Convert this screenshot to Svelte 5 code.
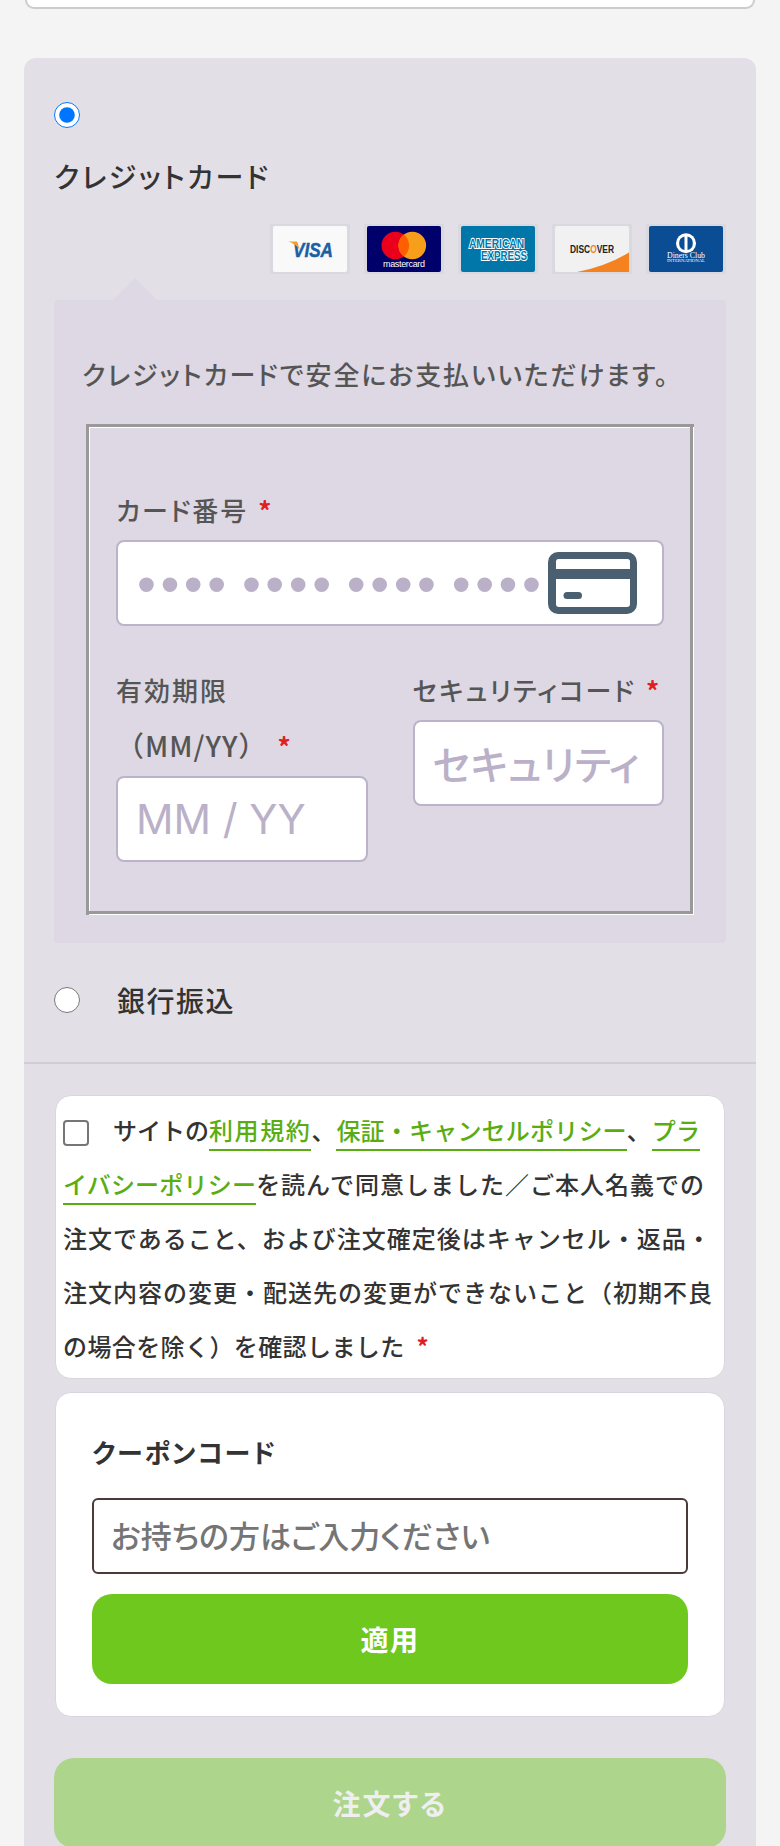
<script>
	let agreed = $state(false);
	let method = $state('card');
	let coupon = $state('');
</script>

<div class="page">
	<div class="prev-card"></div>

	<section class="checkout">
		<div class="methods">
			<label class="radio-top">
				<input type="radio" name="method" value="card" bind:group={method} />
			</label>
			<p class="method-name">クレジットカード</p>

			<div class="brands">
				<span class="brand">
					<svg viewBox="0 0 74 46">
						<rect width="74" height="46" rx="2" fill="#f9f9f9" />
						<text x="40" y="30.5" text-anchor="middle" class="visa" textLength="40" lengthAdjust="spacingAndGlyphs">VISA</text>
						<path d="M15.5 15.5 L24 15.5 L27 24 Q23 18 15.5 15.5 Z" fill="#f2a02c" />
					</svg>
				</span>
				<span class="brand">
					<svg viewBox="0 0 74 46">
						<rect width="74" height="46" rx="2" fill="#00006a" />
						<circle cx="28.3" cy="19.5" r="13.8" fill="#eb001b" />
						<circle cx="45.3" cy="19.5" r="13.8" fill="#f79e1b" />
						<path d="M36.8 8.6 a13.8 13.8 0 0 1 0 21.8 a13.8 13.8 0 0 1 0 -21.8 Z" fill="#ff5f00" />
						<text x="37" y="41" text-anchor="middle" class="mc" textLength="42">mastercard</text>
					</svg>
				</span>
				<span class="brand">
					<svg viewBox="0 0 74 46">
						<rect width="74" height="46" rx="2" fill="#0077a8" />
						<text x="8" y="21.5" class="amex" textLength="55" lengthAdjust="spacingAndGlyphs">AMERICAN</text>
						<text x="20" y="34" class="amex" textLength="46" lengthAdjust="spacingAndGlyphs">EXPRESS</text>
					</svg>
				</span>
				<span class="brand">
					<svg viewBox="0 0 74 46">
						<rect width="74" height="46" rx="2" fill="#f1f1f1" />
						<path d="M22 46 Q52 40 74 26.5 L74 46 Z" fill="#f58220" />
						<text x="15" y="26.5" class="disc" textLength="44" lengthAdjust="spacingAndGlyphs">DISC<tspan fill="#f58220">O</tspan>VER</text>
					</svg>
				</span>
				<span class="brand">
					<svg viewBox="0 0 74 46">
						<rect width="74" height="46" rx="2" fill="#0a4d94" />
						<circle cx="37" cy="17.3" r="10" fill="#fff" />
						<path d="M35.5 10.5 a7 7 0 0 0 0 13.6 Z M38.5 10.5 a7 7 0 0 1 0 13.6 Z" fill="#0a4d94" />
						<text x="37" y="31.5" text-anchor="middle" class="diners" textLength="38" lengthAdjust="spacingAndGlyphs">Diners Club</text>
						<text x="37" y="36" text-anchor="middle" class="diners-sub" textLength="38" lengthAdjust="spacingAndGlyphs">INTERNATIONAL</text>
					</svg>
				</span>
			</div>

			<div class="card-box">
				<p class="card-note">クレジットカードで安全にお支払いいただけます。</p>
				<fieldset>
					<label class="field-label" for="card-number">カード番号<span class="req">*</span></label>
					<div class="number-wrap">
						<input id="card-number" class="field dots" type="text" placeholder="•••• •••• •••• ••••" />
						<svg class="card-icon" viewBox="0 0 89 62">
							<path fill-rule="evenodd" fill="#4a6070" d="M10 0 H79 A10 10 0 0 1 89 10 V52 A10 10 0 0 1 79 62 H10 A10 10 0 0 1 0 52 V10 A10 10 0 0 1 10 0 Z M10 7 A2.5 2.5 0 0 0 8 9.5 V17 H82 V9.5 A2.5 2.5 0 0 0 79.5 7 Z M8 27 V52 A3 3 0 0 0 11 55 H79 A3 3 0 0 0 82 52 V27 Z" />
							<rect x="15.5" y="40" width="18.5" height="7" rx="3.5" fill="#4a6070" />
						</svg>
					</div>
					<div class="two-col">
						<div>
							<label class="field-label" for="card-exp">有効期限<br /><span class="full-paren">（MM/YY）</span><span class="req">*</span></label>
							<input id="card-exp" class="field exp" type="text" placeholder="MM / YY" />
						</div>
						<div>
							<label class="field-label" for="card-cvc">セキュリティコード<span class="req">*</span></label>
							<input id="card-cvc" class="field cvc" type="text" placeholder="セキュリティコード" />
						</div>
					</div>
				</fieldset>
			</div>

			<label class="bank-row">
				<input type="radio" name="method" value="bank" bind:group={method} />
				<span>銀行振込</span>
			</label>
		</div>

		<div class="bottom">
			<div class="terms">
				<input type="checkbox" bind:checked={agreed} /><span class="terms-lead">サイトの</span><a href="#terms">利用規約</a>、<a class="kana" href="#guarantee">保証・キャンセルポリシー</a>、<a class="kana" href="#privacy">プライバシーポリシー</a>を読んで同意しました／ご本人名義での注文であること、および注文確定後はキャンセル・返品・注文内容の変更・配送先の変更ができないこと（初期不良<span class="tail">の場合を除く）を確認しました</span><span class="req">*</span>
			</div>

			<div class="coupon">
				<label class="coupon-title" for="coupon">クーポンコード</label>
				<input id="coupon" class="coupon-input" type="text" placeholder="お持ちの方はご入力ください" bind:value={coupon} />
				<button class="apply" type="button">適用</button>
			</div>

			<button class="order" type="button" disabled>注文する</button>
		</div>
	</section>
</div>

<style>
	:global(body) {
		background: #f4f4f4;
	}
	.page {
		height: 1846px;
		overflow: hidden;
		box-sizing: border-box;
		padding: 0 24px;
		font-family: "Noto Sans CJK JP", "Noto Sans", sans-serif;
		font-feature-settings: "palt";
		color: #333;
	}
	.prev-card {
		box-sizing: border-box;
		height: 9px;
		margin: 0 1px;
		background: #fff;
		border: 2px solid #ccc;
		border-top: 0;
		border-radius: 0 0 12px 12px;
	}
	.checkout {
		margin-top: 49px;
		background: #e2e0e6;
		border-radius: 12px 12px 0 0;
	}
	.methods {
		padding: 44px 30px 0;
		height: 1006px;
		box-sizing: border-box;
		border-bottom: 2px solid #d0cdd6;
	}
	input[type="radio"] {
		width: 26px;
		height: 26px;
		margin: 0;
		display: block;
	}
	.radio-top {
		display: block;
		height: 26px;
	}
	.method-name {
		margin: 26px 0 0;
		font-size: 28px;
		line-height: 44px;
		letter-spacing: 2.5px;
		font-weight: 500;
	}
	.brands {
		display: flex;
		justify-content: flex-end;
		gap: 14px;
		margin-top: 26px;
	}
	.brand {
		display: block;
		box-sizing: border-box;
		width: 80px;
		height: 50px;
		padding: 2px 3px;
		background: #dbd9e0;
	}
	.brand svg {
		display: block;
		width: 74px;
		height: 46px;
	}
	.visa {
		font: italic 700 21px "Liberation Sans", sans-serif;
		fill: #1a5fa5;
		stroke: #1a5fa5;
		stroke-width: 0.5px;
	}
	.mc {
		font: 400 9px "Liberation Sans", sans-serif;
		fill: #fff;
	}
	.amex {
		font: 700 12.5px "Liberation Sans", sans-serif;
		fill: #0077a8;
		stroke: #fff;
		stroke-width: 2px;
		paint-order: stroke;
	}
	.disc {
		font: 700 10px "Liberation Sans", sans-serif;
		fill: #222;
	}
	.diners {
		font: 400 8px "Liberation Serif", serif;
		fill: #fff;
	}
	.diners-sub {
		font: 400 3.5px "Liberation Serif", serif;
		fill: #fff;
	}
	.card-box {
		position: relative;
		margin-top: 26px;
		padding: 1px 32px 28px;
		background: #ddd8e3;
		border-radius: 4px;
	}
	.card-box::before {
		content: "";
		position: absolute;
		left: 59px;
		top: -22px;
		border-left: 22.5px solid transparent;
		border-right: 22.5px solid transparent;
		border-bottom: 22px solid #ddd8e3;
	}
	.card-note {
		margin: 51px -4px 28px;
		font-size: 26px;
		line-height: 44px;
		letter-spacing: 1.9px;
		font-weight: 500;
		color: #555;
	}
	fieldset {
		margin: 0;
		padding: 58px 30px 53px;
		border: 0;
		min-width: 0;
		box-shadow:
			inset 3px 3px 0 #999,
			inset -1px -1px 0 #fff,
			inset -4px -4px 0 #999,
			inset 4px 4px 0 #fff;
	}
	.field-label {
		display: block;
		font-size: 26px;
		line-height: 56px;
		letter-spacing: 2px;
		font-weight: 500;
		color: #555;
		margin-bottom: 2px;
		white-space: nowrap;
	}
	.full-paren {
		font-feature-settings: normal;
		font-size: 28px;
		line-height: 1;
		letter-spacing: 1px;
	}
	.req {
		color: #e02020;
		font-weight: 700;
		margin-left: 10px;
	}
	.field {
		display: block;
		box-sizing: border-box;
		width: 100%;
		height: 86px;
		padding: 0 22px 0 18px;
		background: #fff;
		border: 2px solid #bcb3ca;
		border-radius: 8px;
		font-family: "Noto Sans CJK JP", sans-serif;
		font-feature-settings: "palt";
		font-size: 40px;
		font-weight: 500;
		outline: none;
	}
	.exp {
		font-family: Inter, "Liberation Sans", sans-serif;
		font-size: 41.5px;
		font-weight: 400;
	}
	.field::placeholder {
		color: #bab1c8;
		opacity: 1;
	}
	.number-wrap {
		position: relative;
	}
	.dots {
		font-family: "Liberation Sans", sans-serif;
		font-size: 54px;
		font-weight: 400;
		letter-spacing: 4.5px;
		word-spacing: -8.2px;
		padding-top: 2px;
		padding-left: 19px;
	}
	.card-icon {
		position: absolute;
		right: 27px;
		top: 12px;
		width: 89px;
		height: 62px;
	}
	.two-col {
		display: grid;
		grid-template-columns: 1fr 1fr;
		column-gap: 45px;
		align-items: start;
		margin-top: 36px;
	}
	.bank-row {
		display: flex;
		align-items: center;
		gap: 37px;
		margin-top: 35px;
		font-size: 28px;
		line-height: 44px;
		letter-spacing: 1.5px;
		font-weight: 500;
	}
	.bottom {
		padding: 31px 30px 60px;
	}
	.terms {
		box-sizing: border-box;
		height: 284px;
		margin: 0 1px;
		padding: 7px 7px;
		background: #fff;
		border: 1px solid #d8d6dc;
		border-radius: 16px;
		font-feature-settings: normal;
		font-size: 24px;
		line-height: 54px;
		letter-spacing: 1px;
		font-weight: 500;
		color: #333;
	}
	.terms input {
		appearance: none;
		box-sizing: border-box;
		width: 26px;
		height: 26px;
		margin: 0 24px 0 0;
		vertical-align: -6px;
		background: #fff;
		border: 2px solid #767676;
		border-radius: 4px;
	}
	.terms input:checked {
		background: #0075ff;
		border-color: #0075ff;
	}
	.terms-lead {
		letter-spacing: 0;
	}
	.terms a {
		color: #5aad10;
		text-decoration: none;
		border-bottom: 2px solid #5aad10;
		padding-bottom: 2px;
		letter-spacing: 1.6px;
	}
	.terms a.kana {
		letter-spacing: 0.2px;
	}
	.tail {
		letter-spacing: 0.4px;
	}
	.terms .req {
		margin-left: 12px;
	}
	.coupon {
		box-sizing: border-box;
		height: 325px;
		margin: 13px 1px 0;
		padding: 37px 36px 0;
		background: #fff;
		border: 1px solid #d8d6dc;
		border-radius: 16px;
	}
	.coupon-title {
		display: block;
		font-size: 26px;
		line-height: 44px;
		letter-spacing: 2px;
		font-weight: 700;
		margin-bottom: 24px;
		color: #333;
	}
	.coupon-input {
		display: block;
		box-sizing: border-box;
		width: 100%;
		height: 76px;
		padding: 0 17px 4px;
		border: 2px solid #4a3a3a;
		border-radius: 6px;
		font-family: "Noto Sans CJK JP", sans-serif;
		font-feature-settings: "palt";
		font-size: 31px;
		font-weight: 500;
		outline: none;
	}
	.apply,
	.order {
		display: block;
		width: 100%;
		height: 90px;
		border: 0;
		border-radius: 20px;
		font-family: "Noto Sans CJK JP", sans-serif;
		font-feature-settings: "palt";
		font-weight: 700;
		font-size: 28px;
		letter-spacing: 1.5px;
		color: #fff;
		background: #6fc81e;
	}
	.apply {
		margin-top: 20px;
	}
	.order {
		margin-top: 41px;
		opacity: 0.45;
		letter-spacing: 2px;
	}
</style>
